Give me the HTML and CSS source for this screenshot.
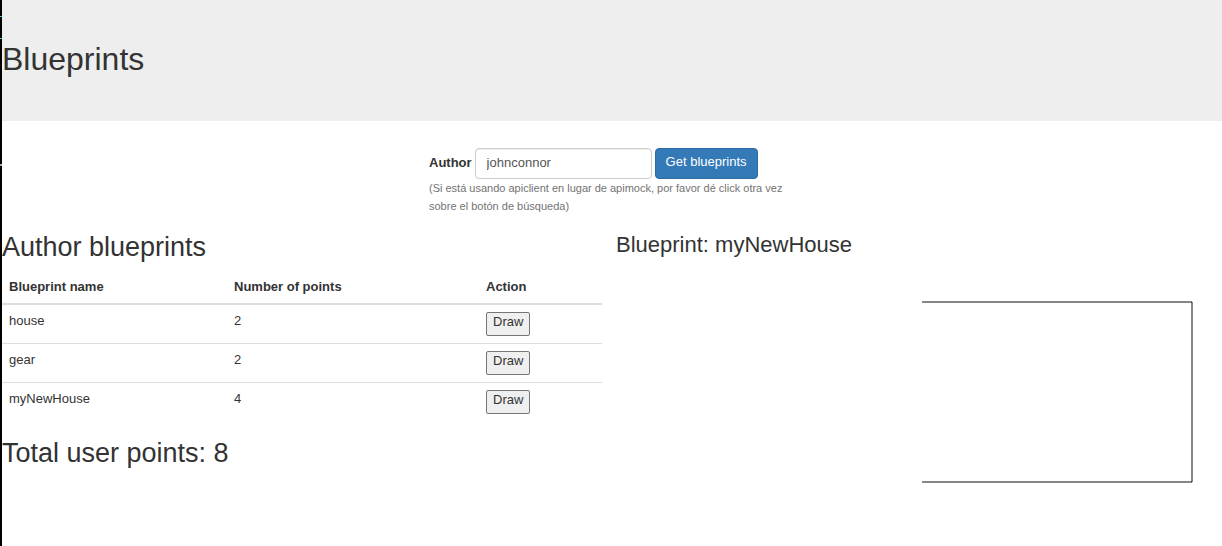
FILE: index.html
```html
<!DOCTYPE html>
<html lang="en">
<head>
<meta charset="utf-8">
<meta name="viewport" content="width=device-width, initial-scale=1">
<title>Blueprints</title>
<link rel="stylesheet" href="styles.css">
</head>
<body>
<div class="edge"></div>
<div class="page">
  <header class="jumbotron">
    <h1 class="title">Blueprints</h1>
  </header>
  <main>
    <form class="search">
      <div class="search-row">
        <label class="search-label" for="author">Author</label>
        <input class="search-input" id="author" type="text" value="johnconnor">
        <button class="search-button" type="button">Get blueprints</button>
      </div>
      <small class="help">(Si está usando apiclient en lugar de apimock, por favor dé click otra vez sobre el botón de búsqueda)</small>
    </form>
    <div class="columns">
      <section class="list">
        <h2 class="heading">Author blueprints</h2>
        <table class="table">
          <colgroup><col class="col-name"><col class="col-points"><col></colgroup>
          <thead>
            <tr><th>Blueprint name</th><th>Number of points</th><th>Action</th></tr>
          </thead>
          <tbody>
            <tr><td>house</td><td>2</td><td><button class="draw" type="button">Draw</button></td></tr>
            <tr><td>gear</td><td>2</td><td><button class="draw" type="button">Draw</button></td></tr>
            <tr><td>myNewHouse</td><td>4</td><td><button class="draw" type="button">Draw</button></td></tr>
          </tbody>
        </table>
        <h2 class="heading">Total user points: 8</h2>
      </section>
      <section class="preview">
        <h3 class="subheading">Blueprint: myNewHouse</h3>
        <svg class="drawing" width="271" height="182" viewBox="0 0 271 182" role="img" aria-label="Drawing of myNewHouse">
          <path d="M0 1H270M270 1V181M270 181H0" fill="none" stroke="#868686" stroke-width="2"/>
          <path d="M269 1h1v1h-1zM269 180h1v1h-1z" fill="#3c3c3c"/>
        </svg>
      </section>
    </div>
  </main>
</div>
</body>
</html>
```
FILE: styles.css
```css
* {
  box-sizing: border-box;
}

body {
  display: flex;
  min-height: 100vh;
  margin: 0;
  background: #fff;
  color: #333;
  font: 13px/18px "Liberation Sans", Arial, sans-serif;
}

.edge {
  flex: 0 0 2px;
  background:
    linear-gradient(#5bb5d5, #5bb5d5) 0 16px / 2px 1px no-repeat,
    linear-gradient(#5bb5d5, #5bb5d5) 0 38px / 2px 1px no-repeat,
    linear-gradient(#aaa, #aaa) 0 164px / 2px 2px no-repeat,
    #000;
}

.page {
  flex: 1;
  min-width: 0;
}

.jumbotron {
  margin-bottom: 27px;
  padding: 41px 0 44px;
  background: #eee;
}

.title,
.heading,
.subheading {
  margin: 0;
  font-weight: 400;
}

.title {
  font-size: 32px;
  line-height: 36px;
}

.heading {
  font-size: 27px;
  line-height: 28px;
}

.subheading {
  font-size: 22px;
  line-height: 24px;
}

.search {
  width: 30%;
  margin: 0 auto 18px;
}

.search-row {
  display: flex;
  align-items: flex-start;
  gap: 3px;
}

.search-label {
  font-weight: 700;
  line-height: 29px;
}

.search-input {
  width: 177px;
  height: 31px;
  padding: 4px 11px 6px;
  border: 1px solid #ccc;
  border-radius: 4px;
  background: #fff;
  box-shadow: inset 0 1px 1px rgba(0, 0, 0, 0.075);
  color: #555;
  font: inherit;
}

.search-button {
  height: 31px;
  padding: 4px 10px 7px;
  border: 1px solid #2e6da4;
  border-radius: 4px;
  background: #337ab7;
  color: #fff;
  font: inherit;
  white-space: nowrap;
}

.help {
  display: block;
  color: #737373;
  font-size: 11px;
}

.columns {
  display: grid;
  grid-template-columns: 1fr 1fr;
}

.list {
  padding-right: 10px;
}

.preview {
  padding-left: 4px;
}

.table {
  width: 100%;
  margin: 10px 0 18px;
  border-collapse: collapse;
  table-layout: fixed;
}

.col-name {
  width: 37.5%;
}

.col-points {
  width: 42%;
}

.table th,
.table td {
  padding: 7px;
  text-align: left;
  vertical-align: top;
}

.table th {
  border-bottom: 2px solid #ddd;
}

.table tr + tr td {
  border-top: 1px solid #ddd;
}

.draw {
  display: block;
  height: 24px;
  padding: 0 6px 4px;
  border: 1px solid #767676;
  border-radius: 2px;
  background: #efefef;
  color: #333;
  font: inherit;
}

.drawing {
  display: block;
  margin: 44px 29px 0 auto;
}
```
